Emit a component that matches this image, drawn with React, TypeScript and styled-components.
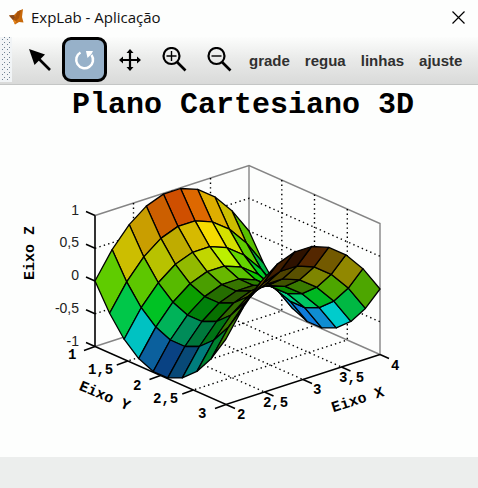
import React from 'react';
import styled, { createGlobalStyle } from 'styled-components';

const GlobalStyle = createGlobalStyle`
  * { box-sizing: border-box; }
  body { margin: 0; background: #eceeed; }
`;

const Window = styled.div`
  min-height: 100vh;
  display: flex;
  flex-direction: column;
  background: #eceeed;
`;

const TitleBar = styled.header`
  display: flex;
  align-items: center;
  gap: 7px;
  height: 37px;
  padding: 0 8px 3px;
  background: #fdfefd;
`;

const WindowTitle = styled.span`
  flex: 1;
  font: 15px/20px 'Open Sans', 'Noto Sans', sans-serif;
  color: #111;
`;

const CloseButton = styled.button`
  display: flex;
  align-items: center;
  justify-content: center;
  width: 24px;
  height: 24px;
  padding: 0;
  border: 0;
  background: none;
`;

const Toolbar = styled.div`
  display: flex;
  align-items: flex-start;
  height: 48px;
  background: linear-gradient(#fcfdfc, #e8e9e8 50%, #d9dad9);
  border-bottom: 1px solid #c4c6c5;
`;

const Grip = styled.span`
  width: 12px;
  height: 45px;
  margin-right: 5px;
  background-color: #f1f4f6;
  background-image: radial-gradient(#6f8192 20%, transparent 24%),
    radial-gradient(#6f8192 20%, transparent 24%);
  background-size: 5px 5px;
  background-position: 0 0, 2px 3px;
`;

const ToolButton = styled.button<{ $active?: boolean }>`
  display: flex;
  align-items: center;
  justify-content: center;
  width: 45px;
  height: 45px;
  padding: 0;
  border: 3px solid ${(p) => (p.$active ? '#000' : 'transparent')};
  border-radius: 9px;
  background: ${(p) => (p.$active ? '#97b1c9' : 'none')};
`;

const TextTools = styled.div`
  display: flex;
  align-items: center;
  gap: 15px;
  height: 47px;
  margin-left: 7px;
`;

const TextButton = styled.button`
  padding: 0;
  border: 0;
  background: none;
  font: bold 15px/18px 'Liberation Sans', Arial, sans-serif;
  color: #303030;
`;

const PlotArea = styled.main`
  padding-top: 4px;
  background: #fdfefd;
`;

const PlotTitle = styled.h1`
  margin: 0;
  padding-left: 8px;
  text-align: center;
  font: bold 30px/32px 'Courier New', 'Liberation Mono', monospace;
  color: #000;
`;

const Plot = styled.svg`
  display: block;
  width: 100%;
  height: auto;
`;

const ZLabel = styled.text`
  font: 14px 'Liberation Sans', Arial, sans-serif;
  text-anchor: end;
  fill: #222;
`;

const TickLabel = styled.text`
  font: bold 14px 'Liberation Mono', monospace;
`;

const AxisLabel = styled.text`
  font: bold 15px 'Courier New', 'Liberation Mono', monospace;
  text-anchor: middle;
`;

const N = 9;

/* t runs along X (2..4), s along Y (1..3), z is the height (-1..1) */
const project = (t: number, s: number, z: number): [number, number] => [
  95 + 154 * t + 131 * s,
  160 - 50 * t + 58 * s - 65.5 * z,
];
const height = (t: number, s: number) => 4 * t * (1 - t) - 4 * s * (1 - s);
const points = (list: [number, number][]) =>
  list.map(([x, y]) => `${x.toFixed(1)},${y.toFixed(1)}`).join(' ');

/* brightness of every facet: a row per s, a column per t */
const SHADE = [
  [80, 80, 79, 80, 81, 87, 87, 80, 75],
  [78, 78, 76, 75, 84, 96, 88, 80, 70],
  [76, 76, 73, 73, 84, 94, 84, 80, 65],
  [66, 70, 62, 62, 72, 76, 78, 82, 90],
  [55, 55, 50, 43, 46, 50, 65, 82, 92],
  [50, 47, 44, 34, 32, 35, 55, 78, 88],
  [49, 45, 42, 35, 30, 32, 48, 72, 80],
  [51, 47, 45, 35, 30, 35, 52, 65, 72],
  [52, 48, 40, 25, 18, 33, 45, 57, 65],
];

const HUES: [number, number][] = [
  [-0.8, 213],
  [-0.74, 205],
  [-0.59, 180],
  [-0.35, 143],
  [-0.2, 125],
  [0, 92],
  [0.2, 66],
  [0.35, 56],
  [0.59, 47],
  [0.74, 28],
  [0.8, 22],
];

const hueOf = (z: number) => {
  for (let i = 1; i < HUES.length; i += 1) {
    const [z0, h0] = HUES[i - 1];
    const [z1, h1] = HUES[i];
    if (z <= z1) return h0 + ((h1 - h0) * Math.max(0, z - z0)) / (z1 - z0);
  }
  return 22;
};

const facets: { key: string; shape: string; fill: string }[] = [];
for (let j = N - 1; j >= 0; j -= 1) {
  for (let i = 0; i < N; i += 1) {
    const corners = [[j, i], [j + 1, i], [j + 1, i + 1], [j, i + 1]].map(([a, b]) =>
      project(a / N, b / N, height(a / N, b / N)),
    );
    const z = height((j + 0.5) / N, (i + 0.5) / N);
    const saturation = z < -0.7 ? 87 : 100;
    const hue = hueOf(z) - (z < -0.7 && j > 4 ? 4 : 0);
    facets.push({
      key: `${j}-${i}`,
      shape: points(corners),
      fill: `hsl(${hue.toFixed(0)} ${saturation}% ${SHADE[i][j] / 2}%)`,
    });
  }
}

type P3 = [number, number, number];
const Q = [0.25, 0.5, 0.75];
const GRID: P3[][] = [
  ...Q.map((q): P3[] => [[q, 0, 1], [q, 0, -1], [q, 1, -1]]),
  ...Q.map((q): P3[] => [[1, q, 1], [1, q, -1], [0, q, -1]]),
  ...Q.map((q): P3[] => [[0, 0, 2 * q - 1], [1, 0, 2 * q - 1], [1, 1, 2 * q - 1]]),
];
const EDGES: P3[][] = [
  [[0, 0, 1], [1, 0, 1], [1, 1, 1], [1, 1, -1]],
  [[0, 0, -1], [1, 0, -1], [1, 1, -1]],
  [[1, 0, 1], [1, 0, -1]],
];
const line = (list: P3[]) => points(list.map(([t, s, z]) => project(t, s, z)));

const Z_TICKS = ['-1', '-0,5', '0', '0,5', '1'];
const Y_TICKS: [number, string, number, number][] = [
  [0, '1', 68, 238],
  [0.25, '1,5', 88, 253],
  [0.5, '2', 133, 269],
  [0.75, '2,5', 153, 282],
  [1, '3', 198, 297],
];
const X_TICKS: [number, string, number, number][] = [
  [0, '2', 237, 298],
  [0.25, '2,5', 263, 286],
  [0.5, '3', 313, 273],
  [0.75, '3,5', 339, 261],
  [1, '4', 391, 249],
];

function Surface() {
  return (
    <Plot viewBox="0 0 478 336" role="img" aria-label="Plano Cartesiano 3D">
      <g fill="none" stroke="#858585" strokeWidth="1.4">
        {EDGES.map((e) => <polyline key={line(e)} points={line(e)} />)}
      </g>
      <g fill="none" stroke="#000" strokeWidth="1.4" strokeDasharray="1.4 3.2">
        {GRID.map((e) => <polyline key={line(e)} points={line(e)} />)}
      </g>
      <polyline
        fill="none"
        stroke="#000"
        strokeWidth="1.6"
        points={line([[0, 0, 1], [0, 0, -1], [0, 1, -1], [1, 1, -1]])}
      />
      <g stroke="#000" strokeWidth="1.3" strokeLinejoin="round">
        {facets.map((f) => <polygon key={f.key} points={f.shape} fill={f.fill} />)}
      </g>
      <g stroke="#000" strokeWidth="1.4">
        {Z_TICKS.map((label, i) => {
          const [x, y] = project(0, 0, i / 2 - 1);
          return <line key={label} x1={x} y1={y} x2={x - 9} y2={y - 4} />;
        })}
        {Y_TICKS.map(([s, label]) => {
          const [x, y] = project(0, s, -1);
          return <line key={label} x1={x} y1={y} x2={x - 11} y2={y + 4} />;
        })}
        {X_TICKS.map(([t, label]) => {
          const [x, y] = project(t, 1, -1);
          return <line key={label} x1={x} y1={y} x2={x + 9} y2={y + 4} />;
        })}
      </g>
      {Z_TICKS.map((label, i) => (
        <ZLabel key={label} x="79" y={project(0, 0, i / 2 - 1)[1] - 1}>{label}</ZLabel>
      ))}
      {[...Y_TICKS, ...X_TICKS].map(([, label, x, y]) => (
        <TickLabel key={`${label}-${x}`} x={x} y={y}>{label}</TickLabel>
      ))}
      <AxisLabel transform="translate(34 132) rotate(-90)">Eixo Z</AxisLabel>
      <AxisLabel transform="translate(103 279) rotate(23)">Eixo Y</AxisLabel>
      <AxisLabel transform="translate(359 283) rotate(-18)">Eixo X</AxisLabel>
    </Plot>
  );
}

const Logo = () => (
  <svg width="16" height="16" viewBox="0 0 16 16" aria-hidden="true">
    <path d="M1 6.500 6 6 9.500 2.500 15 0 14 8 15.500 13.500 11 13 7 15.500 5 11Z" fill="#c8690a" />
    <path d="M1 6.500 6 6 7 9 5 11Z" fill="#8a4a1a" />
    <path d="M9.500 2.500 13 1 11 9 8 12 6 11Z" fill="#a85208" />
    <path d="M5 11 8 12 7 15.500Z" fill="#e88a20" />
  </svg>
);

const CloseIcon = () => (
  <svg width="13" height="13" viewBox="0 0 13 13" stroke="#000" strokeWidth="1.2">
    <path d="M.5.5l12 12M12.5.5l-12 12" />
  </svg>
);

const ArrowIcon = () => (
  <svg width="26" height="26" viewBox="0 0 26 26">
    <path d="M2 2 18 7.500 7.500 18Z" />
    <path d="M11 11 23 23" stroke="#000" strokeWidth="2.600" />
  </svg>
);

const RotateIcon = () => (
  <svg width="26" height="26" viewBox="0 0 26 26" fill="none" stroke="#fff" strokeWidth="2.500">
    <path d="M8.500 5.500A8.400 8.400 0 1 0 19.500 8" />
    <path d="M14 4h7l-1.500 3-4 4Z" fill="#fff" stroke="none" />
  </svg>
);

const MoveIcon = () => (
  <svg width="24" height="24" viewBox="0 0 24 24">
    <path d="M12 3v18M3 12h18" stroke="#000" strokeWidth="2.200" />
    <path d="M12 1l3.500 4h-7ZM12 23l3.500-4h-7ZM1 12l4-3.500v7ZM23 12l-4-3.500v7Z" />
  </svg>
);

const ZoomIcon = ({ plus }: { plus?: boolean }) => (
  <svg width="26" height="26" viewBox="0 0 26 26" fill="none" stroke="#000">
    <circle cx="9.500" cy="9" r="8" strokeWidth="2.200" />
    <path d="M15 15 23.500 23.500" strokeWidth="2.600" />
    <path d={plus ? 'M4.500 9h10M9.500 4v10' : 'M4.500 9h10'} strokeWidth="1.400" />
  </svg>
);

export default function App() {
  return (
    <Window>
      <GlobalStyle />
      <TitleBar>
        <Logo />
        <WindowTitle>ExpLab - Aplicação</WindowTitle>
        <CloseButton aria-label="Fechar"><CloseIcon /></CloseButton>
      </TitleBar>
      <Toolbar role="toolbar">
        <Grip />
        <ToolButton aria-label="Selecionar"><ArrowIcon /></ToolButton>
        <ToolButton $active aria-pressed="true" aria-label="Girar"><RotateIcon /></ToolButton>
        <ToolButton aria-label="Mover"><MoveIcon /></ToolButton>
        <ToolButton aria-label="Ampliar"><ZoomIcon plus /></ToolButton>
        <ToolButton aria-label="Reduzir"><ZoomIcon /></ToolButton>
        <TextTools>
          {['grade', 'regua', 'linhas', 'ajuste'].map((name) => (
            <TextButton key={name}>{name}</TextButton>
          ))}
        </TextTools>
      </Toolbar>
      <PlotArea>
        <PlotTitle>Plano Cartesiano 3D</PlotTitle>
        <Surface />
      </PlotArea>
    </Window>
  );
}
